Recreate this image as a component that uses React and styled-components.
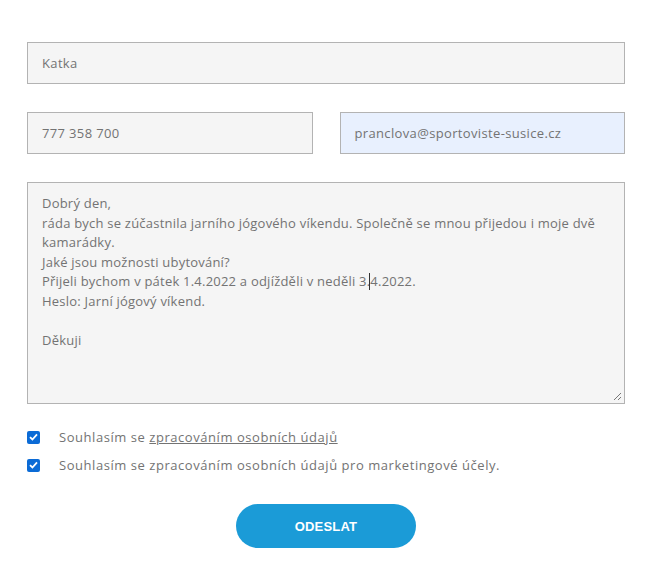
import React from 'react';
import styled, { createGlobalStyle } from 'styled-components';

const GlobalStyle = createGlobalStyle`
  body {
    margin: 0;
    background: #fff;
    font-family: "Open Sans", Lato, sans-serif;
  }
`;

const Form = styled.form`
  width: 598px;
  padding: 42px 0 0 27px;
  display: flex;
  flex-direction: column;
`;

const Row = styled.div`
  display: flex;
  gap: 27px;
  margin-bottom: ${props => props.gap || 28}px;
`;

const Field = styled.div`
  box-sizing: border-box;
  flex: 1;
  height: 42px;
  border: 1px solid #b3b3b3;
  background: ${props => (props.autofill ? '#e8f0fe' : '#f5f5f5')};
  padding: 0 14px;
  display: flex;
  align-items: center;
  font-size: 13px;
  letter-spacing: 0.35px;
  color: #737373;
`;

const Message = styled.div`
  box-sizing: border-box;
  position: relative;
  height: 222px;
  border: 1px solid #b3b3b3;
  background: #f5f5f5;
  padding: 11px 14px;
  font-size: 13px;
  letter-spacing: 0.22px;
  line-height: 19.5px;
  color: #737373;
  white-space: pre-wrap;
  margin-bottom: 23px;
`;

const Cursor = styled.span`
  position: relative;
  &::before {
    content: '';
    position: absolute;
    left: -1px;
    top: 1px;
    bottom: 0;
    width: 1px;
    background: #333;
  }
`;

const Grip = styled.svg`
  position: absolute;
  right: 2px;
  bottom: 2px;
`;

const Consent = styled.label`
  display: flex;
  align-items: center;
  gap: 19px;
  font-size: 13px;
  letter-spacing: 0.55px;
  color: #737373;
  height: 20px;
  margin-bottom: 8px;
`;

const Box = styled.span`
  width: 13px;
  height: 13px;
  border-radius: 2px;
  background: #0b6bd6;
  display: flex;
  align-items: center;
  justify-content: center;
  flex-shrink: 0;
`;

const Link = styled.a`
  color: inherit;
  text-decoration: underline;
`;

const Submit = styled.button`
  align-self: center;
  margin-top: 21px;
  width: 180px;
  height: 44px;
  border: none;
  border-radius: 22px;
  background: #1b9bd7;
  color: #fff;
  font-family: "Liberation Sans", Arial, sans-serif;
  font-weight: bold;
  font-size: 13px;
  letter-spacing: 0.2px;
`;

function Check() {
  return (
    <Box>
      <svg width="9" height="8" viewBox="0 0 9 8">
        <path d="M1 4.2 L3.4 6.5 L8 1.3" stroke="#fff" strokeWidth="1.8" fill="none" />
      </svg>
    </Box>
  );
}

export default function App() {
  return (
    <>
      <GlobalStyle />
      <Form>
        <Row gap={28}>
          <Field>Katka</Field>
        </Row>
        <Row gap={28}>
          <Field>777 358 700</Field>
          <Field autofill>pranclova@sportoviste-susice.cz</Field>
        </Row>
        <Message>
          {'Dobrý den,\nráda bych se zúčastnila jarního jógového víkendu. Společně se mnou přijedou i moje dvě kamarádky.\nJaké jsou možnosti ubytování?\nPřijeli bychom v pátek 1.4.2022 a odjížděli v neděli 3.'}
          <Cursor>4.2022.</Cursor>
          {'\nHeslo: Jarní jógový víkend.\n\nDěkuji'}
          <Grip width="9" height="9" viewBox="0 0 9 9">
            <path d="M8 1 L1 8 M8 5 L5 8" stroke="#777" strokeWidth="1" />
          </Grip>
        </Message>
        <Consent>
          <Check />
          <span>
            Souhlasím se <Link>zpracováním osobních údajů</Link>
          </span>
        </Consent>
        <Consent>
          <Check />
          <span>Souhlasím se zpracováním osobních údajů pro marketingové účely.</span>
        </Consent>
        <Submit type="button">ODESLAT</Submit>
      </Form>
    </>
  );
}
